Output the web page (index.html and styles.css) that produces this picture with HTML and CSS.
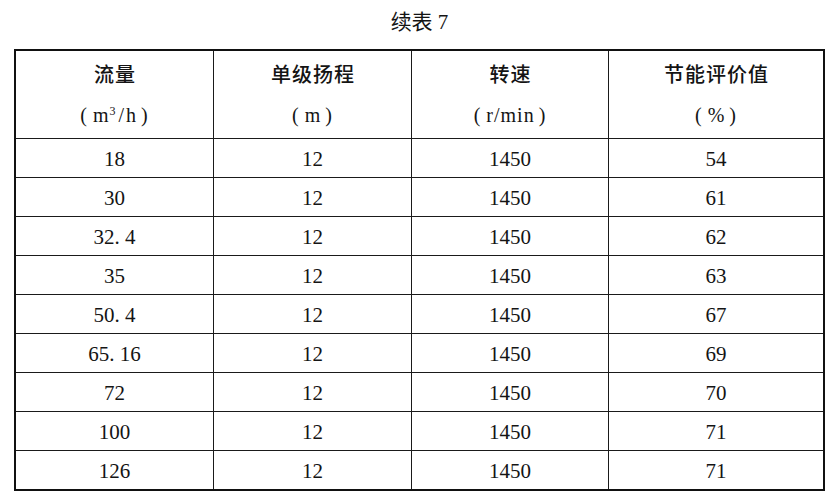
FILE: index.html
```html
<!DOCTYPE html>
<html lang="zh-CN">
<head>
<meta charset="utf-8">
<title>续表 7</title>
<link rel="stylesheet" href="styles.css">
</head>
<body>
<div class="page">
  <div class="title">续表 7</div>
  <table class="grid">
    <colgroup>
      <col class="c1"><col class="c2"><col class="c3"><col class="c4">
    </colgroup>
    <thead>
      <tr>
        <th><span class="zh">流量</span><br><span class="unit"><span class="pl">(</span>m<sup>3</sup><span class="sl">/</span>h<span class="pr">)</span></span></th>
        <th><span class="zh">单级扬程</span><br><span class="unit"><span class="pl">(</span>m<span class="pr">)</span></span></th>
        <th><span class="zh">转速</span><br><span class="unit"><span class="pl">(</span>r/min<span class="pr">)</span></span></th>
        <th><span class="zh">节能评价值</span><br><span class="unit"><span class="pl">(</span>%<span class="pr">)</span></span></th>
      </tr>
    </thead>
    <tbody>
      <tr><td>18</td><td>12</td><td>1450</td><td>54</td></tr>
      <tr><td>30</td><td>12</td><td>1450</td><td>61</td></tr>
      <tr><td>32. 4</td><td>12</td><td>1450</td><td>62</td></tr>
      <tr><td>35</td><td>12</td><td>1450</td><td>63</td></tr>
      <tr><td>50. 4</td><td>12</td><td>1450</td><td>67</td></tr>
      <tr><td>65. 16</td><td>12</td><td>1450</td><td>69</td></tr>
      <tr><td>72</td><td>12</td><td>1450</td><td>70</td></tr>
      <tr><td>100</td><td>12</td><td>1450</td><td>71</td></tr>
      <tr><td>126</td><td>12</td><td>1450</td><td>71</td></tr>
    </tbody>
  </table>
</div>
</body>
</html>
```

FILE: styles.css
```css
html, body {
  margin: 0;
  padding: 0;
  background: #ffffff;
}

body {
  font-family: "Liberation Serif", "Noto Sans CJK SC", serif;
  color: #141414;
}

.page {
  width: 835px;
  height: 500px;
  padding-left: 14px;
  box-sizing: border-box;
}

.title {
  width: 811px;
  height: 49px;
  line-height: 44px;
  font-size: 21px;
  text-align: center;
}

.grid {
  width: 811px;
  table-layout: fixed;
  border-collapse: separate;
  border-spacing: 0;
  border: 2px solid #111;
}

.c1 { width: 198px; }
.c2 { width: 198px; }
.c3 { width: 197px; }
.c4 { width: 214px; }

.grid th,
.grid td {
  padding: 0;
  text-align: center;
  vertical-align: middle;
  border-right: 1px solid #1a1a1a;
  border-bottom: 1px solid #1a1a1a;
}

.grid th:last-child,
.grid td:last-child {
  border-right: none;
}

.grid tbody tr:last-child td {
  border-bottom: none;
}

.grid th {
  height: 85px;
  padding-top: 2px;
  font-weight: normal;
  line-height: 38px;
}

.zh {
  font-family: "Noto Sans CJK SC", sans-serif;
  font-weight: 500;
  font-size: 20px;
  letter-spacing: 1px;
  margin-right: -1px;
}

.unit {
  font-size: 20px;
  letter-spacing: 1px;
}

.pl {
  margin-right: 5px;
}

.pr {
  margin-left: 4px;
}

.sl {
  margin: 0 1px 0 2px;
}

.unit sup {
  font-size: 12px;
  vertical-align: 7px;
  line-height: 0;
}

.grid td {
  height: 36px;
  padding-top: 2px;
  font-size: 21px;
  line-height: 36px;
}
```
